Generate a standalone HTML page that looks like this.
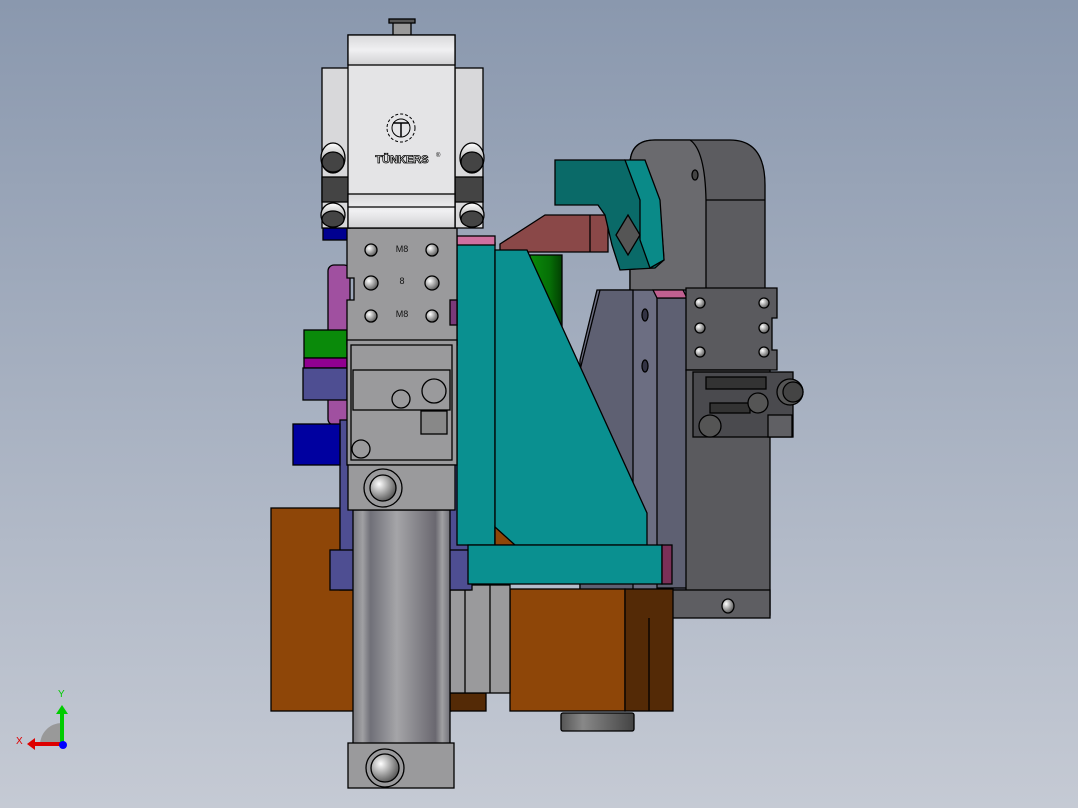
<!DOCTYPE html>
<html><head><meta charset="utf-8"><style>
html,body{margin:0;padding:0;width:1078px;height:808px;overflow:hidden}
svg{display:block}
text{font-family:"Liberation Sans",sans-serif}
</style></head><body>
<svg width="1078" height="808" viewBox="0 0 1078 808" xmlns="http://www.w3.org/2000/svg" stroke="#000" stroke-width="1.3">
<defs>
<linearGradient id="bg" x1="0" y1="0" x2="0" y2="1"><stop offset="0" stop-color="#8a98ae"/><stop offset="1" stop-color="#c5cad4"/></linearGradient>
<linearGradient id="cyl" x1="0" y1="0" x2="1" y2="0"><stop offset="0" stop-color="#7a7a80"/><stop offset=".1" stop-color="#a0a0a3"/><stop offset=".18" stop-color="#707078"/><stop offset=".45" stop-color="#a5a5a8"/><stop offset=".85" stop-color="#6a6870"/><stop offset=".92" stop-color="#a0a0a2"/><stop offset="1" stop-color="#707078"/></linearGradient>
<linearGradient id="hd" x1="0" y1="0" x2="0" y2="1"><stop offset="0" stop-color="#d8d8da"/><stop offset=".5" stop-color="#f0f0f2"/><stop offset="1" stop-color="#d0d0d2"/></linearGradient>
<linearGradient id="puck" x1="0" y1="0" x2="1" y2="0"><stop offset="0" stop-color="#555"/><stop offset=".3" stop-color="#888"/><stop offset="1" stop-color="#444"/></linearGradient>
<radialGradient id="bolt" cx=".35" cy=".35" r=".7"><stop offset="0" stop-color="#fff"/><stop offset=".6" stop-color="#999"/><stop offset="1" stop-color="#555"/></radialGradient>
<linearGradient id="grn" x1="0" y1="0" x2="1" y2="0"><stop offset="0" stop-color="#0a8a0a"/><stop offset=".6" stop-color="#067006"/><stop offset="1" stop-color="#024002"/></linearGradient>
<linearGradient id="rol" x1="0" y1="0" x2="0" y2="1"><stop offset="0" stop-color="#fff"/><stop offset=".5" stop-color="#bbb"/><stop offset="1" stop-color="#666"/></linearGradient>
</defs>
<rect width="1078" height="808" fill="url(#bg)" stroke="none"/>

<!-- right dark tower -->
<path d="M630,300 L630,165 Q630,140 655,140 L730,140 Q765,140 765,185 L765,615 L630,615 Z" fill="#5c5c60"/>
<path d="M630,165 Q630,140 655,140 L690,140 Q705,150 706,200 L706,300 L630,300 Z" fill="#6a6a6e"/>
<line x1="706" y1="200" x2="765" y2="200"/>
<ellipse cx="695" cy="175" rx="3" ry="5" fill="#444"/>

<!-- gray plates -->
<polygon points="597,290 690,290 690,590 580,590 580,360" fill="#6c6e82"/>
<polygon points="600,290 633,290 633,590 580,590 580,370" fill="#5e6072"/>
<rect x="657" y="298" width="30" height="290" fill="#5e6072"/>
<polygon points="653,290 683,290 687,298 657,298" fill="#c06090"/>
<ellipse cx="645" cy="315" rx="3" ry="6" fill="#334"/>
<ellipse cx="645" cy="366" rx="3" ry="6" fill="#334"/>

<!-- right block with holes -->
<polygon points="686,288 777,288 777,318 772,318 772,350 777,350 777,370 686,370" fill="#5a5a5e"/>
<g fill="url(#bolt)"><circle cx="700" cy="303" r="5"/><circle cx="764" cy="303" r="5"/><circle cx="700" cy="328" r="5"/><circle cx="764" cy="328" r="5"/><circle cx="700" cy="352" r="5"/><circle cx="764" cy="352" r="5"/></g>
<rect x="686" y="370" width="84" height="245" fill="#5a5a5e"/>
<rect x="693" y="372" width="100" height="65" fill="#4a4a4e"/>
<rect x="706" y="377" width="60" height="12" fill="#333"/>
<rect x="710" y="403" width="40" height="10" fill="#333"/>
<circle cx="790" cy="392" r="13" fill="#555"/><circle cx="793" cy="392" r="10" fill="#444"/>
<circle cx="758" cy="403" r="10" fill="#555"/>
<circle cx="710" cy="426" r="11" fill="#555"/>
<rect x="768" y="415" width="24" height="22" fill="#606064"/>
<rect x="636" y="590" width="134" height="28" fill="#5e5e62"/>
<ellipse cx="654" cy="606" rx="4" ry="7" fill="#333"/>
<ellipse cx="728" cy="606" rx="6" ry="7" fill="url(#bolt)"/>

<!-- orange blocks -->
<rect x="271" y="508" width="180" height="203" fill="#8e4608"/>
<rect x="450" y="693" width="36" height="18" fill="#542a06"/>
<rect x="510" y="589" width="115" height="122" fill="#8e4608"/>
<rect x="625" y="589" width="48" height="122" fill="#542a06"/>
<line x1="649" y1="618" x2="649" y2="711"/>
<rect x="561" y="713" width="73" height="18" rx="2" fill="url(#puck)"/>
<rect x="450" y="585" width="60" height="108" fill="#9a9a9c"/>
<line x1="465" y1="585" x2="465" y2="693"/><line x1="490" y1="585" x2="490" y2="693"/>

<!-- green cylinder -->
<rect x="530" y="255" width="32" height="80" fill="url(#grn)"/>

<!-- maroon finger -->
<polygon points="500,244 545,215 608,215 608,252 500,252" fill="#8a4848"/>
<line x1="590" y1="215" x2="590" y2="252"/>

<!-- teal clamp -->
<polygon points="555,160 625,160 645,175 660,205 664,260 655,268 620,270 612,245 605,215 598,205 555,205" fill="#0a6a68"/>
<polygon points="625,160 645,160 660,200 664,260 650,268 640,240 640,200" fill="#0a8a88"/>
<polygon points="628,215 640,235 628,255 616,235" fill="#555"/>

<!-- left colored parts -->
<rect x="328" y="265" width="22" height="160" rx="6" fill="#a050a0"/>
<rect x="340" y="420" width="130" height="170" fill="#4e4e92"/>
<rect x="330" y="550" width="142" height="40" fill="#4e4e92"/>
<rect x="304" y="330" width="43" height="28" fill="#0a8a0a"/>
<rect x="304" y="358" width="43" height="10" fill="#900090"/>
<rect x="303" y="368" width="44" height="32" fill="#4e4e92"/>
<rect x="293" y="424" width="47" height="41" fill="#0000a0"/>
<rect x="323" y="228" width="30" height="12" fill="#000090"/>

<!-- teal bracket -->
<rect x="457" y="243" width="38" height="302" fill="#0a9090"/>
<polygon points="495,250 527,250 647,513 647,545 495,545" fill="#0a9090"/>
<polygon points="495,527 515,545 495,545" fill="#8e4608"/>
<rect x="457" y="236" width="38" height="9" fill="#d070a0"/>
<rect x="468" y="545" width="194" height="39" fill="#0a9090"/>
<rect x="662" y="545" width="10" height="39" fill="#7a3058"/>

<!-- cylinder -->
<rect x="353" y="510" width="97" height="235" fill="url(#cyl)"/>
<rect x="348" y="743" width="106" height="45" fill="#9a9a9c"/>
<circle cx="385" cy="768" r="19" fill="none"/><circle cx="385" cy="768" r="14" fill="url(#bolt)"/>

<!-- gray main block -->
<polygon points="347,228 457,228 457,345 347,345 347,300 354,300 354,278 347,278" fill="#9a9a9c"/>
<rect x="450" y="300" width="7" height="25" fill="#7a3a7a"/>
<g fill="url(#bolt)"><circle cx="371" cy="250" r="6"/><circle cx="432" cy="250" r="6"/><circle cx="371" cy="283" r="7"/><circle cx="432" cy="283" r="7"/><circle cx="371" cy="316" r="6"/><circle cx="432" cy="316" r="6"/></g>
<g font-size="9" stroke="none" fill="#111" text-anchor="middle"><text x="402" y="252">M8</text><text x="402" y="284">8</text><text x="402" y="317">M8</text></g>
<rect x="347" y="340" width="110" height="125" fill="#9a9a9c"/>
<rect x="351" y="345" width="101" height="115" fill="#9a9a9c"/>
<rect x="353" y="370" width="97" height="40" fill="#9a9a9c"/>
<circle cx="401" cy="399" r="9" fill="#9a9a9c"/>
<circle cx="434" cy="391" r="12" fill="#9a9a9c"/>
<rect x="421" y="411" width="26" height="23" fill="#888"/>
<circle cx="361" cy="449" r="9" fill="#9a9a9c"/>
<rect x="348" y="465" width="107" height="45" fill="#9a9a9c"/>
<circle cx="383" cy="488" r="19" fill="none"/><circle cx="383" cy="488" r="13" fill="url(#bolt)"/>

<!-- head -->
<rect x="322" y="68" width="28" height="160" fill="#d8d8da"/>
<rect x="455" y="68" width="28" height="160" fill="#d8d8da"/>
<rect x="322" y="177" width="28" height="25" fill="#444"/>
<rect x="455" y="177" width="28" height="25" fill="#444"/>
<ellipse cx="333" cy="158" rx="12" ry="15" fill="url(#rol)"/><ellipse cx="333" cy="162" rx="11" ry="10" fill="#444"/>
<ellipse cx="472" cy="158" rx="12" ry="15" fill="url(#rol)"/><ellipse cx="472" cy="162" rx="11" ry="10" fill="#444"/>
<ellipse cx="333" cy="215" rx="12" ry="12" fill="url(#rol)"/><ellipse cx="333" cy="219" rx="11" ry="8" fill="#444"/>
<ellipse cx="472" cy="215" rx="12" ry="12" fill="url(#rol)"/><ellipse cx="472" cy="219" rx="11" ry="8" fill="#444"/>
<rect x="393" y="20" width="18" height="16" fill="#999"/>
<rect x="389" y="19" width="26" height="4" fill="#555"/>
<rect x="348" y="35" width="107" height="193" fill="#e4e4e6"/>
<rect x="348" y="35" width="107" height="30" fill="url(#hd)"/>
<rect x="348" y="194" width="107" height="34" fill="url(#hd)"/>
<line x1="348" y1="207" x2="455" y2="207"/>
<circle cx="401" cy="128" r="14" fill="none" stroke-width="1" stroke-dasharray="3 2"/>
<circle cx="401" cy="128" r="9" fill="none" stroke-width="1"/>
<path d="M393,123 H409 M401,123 V137" fill="none" stroke-width="1.5"/>
<text x="402" y="163" font-size="11" font-weight="bold" text-anchor="middle" fill="#fff" stroke="#000" stroke-width=".8">TÜNKERS</text>
<text x="436" y="157" font-size="6" stroke="none" fill="#000">®</text>

<!-- axes -->
<path d="M40,745 A22,22 0 0 1 62,723 L62,745 Z" fill="#999" stroke="none"/>
<line x1="62" y1="745" x2="62" y2="713" stroke="#0c0" stroke-width="4"/>
<polygon points="56,714 62,705 68,714" fill="#0c0" stroke="none"/>
<line x1="62" y1="744" x2="34" y2="744" stroke="#d00" stroke-width="4"/>
<polygon points="35,738 27,744 35,750" fill="#d00" stroke="none"/>
<circle cx="63" cy="745" r="4" fill="#00f" stroke="none"/>
<text x="58" y="697" font-size="10" fill="#0c0" stroke="none">Y</text>
<text x="16" y="744" font-size="10" fill="#d00" stroke="none">X</text>
</svg>
</body></html>
